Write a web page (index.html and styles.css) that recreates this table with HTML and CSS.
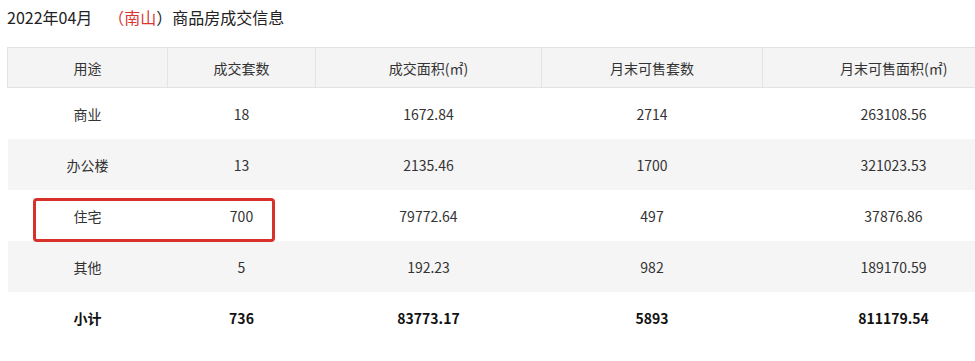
FILE: index.html
```html
<!DOCTYPE html>
<html lang="zh">
<head>
<meta charset="utf-8">
<link rel="stylesheet" href="styles.css">
</head>
<body>
<div class="page">
  <div class="title">2022年04月<span class="gap"></span><span class="red">（南山</span>）商品房成交信息</div>
  <div class="clip">
    <div class="table-wrap">
      <table class="data">
        <colgroup>
          <col class="c1"><col class="c2"><col class="c3"><col class="c4"><col class="c5">
        </colgroup>
        <thead>
          <tr><th>用途</th><th>成交套数</th><th>成交面积(㎡)</th><th>月末可售套数</th><th>月末可售面积(㎡)</th></tr>
        </thead>
        <tbody>
          <tr><td>商业</td><td>18</td><td>1672.84</td><td>2714</td><td>263108.56</td></tr>
          <tr class="alt"><td>办公楼</td><td>13</td><td>2135.46</td><td>1700</td><td>321023.53</td></tr>
          <tr><td>住宅</td><td>700</td><td>79772.64</td><td>497</td><td>37876.86</td></tr>
          <tr class="alt"><td>其他</td><td>5</td><td>192.23</td><td>982</td><td>189170.59</td></tr>
          <tr class="total"><td>小计</td><td>736</td><td>83773.17</td><td>5893</td><td>811179.54</td></tr>
        </tbody>
      </table>
      <div class="highlight"></div>
    </div>
  </div>
</div>
</body>
</html>
```
FILE: styles.css
```css
html, body {
  margin: 0;
  padding: 0;
  background: #fff;
  overflow: hidden;
}
body {
  font-family: "Noto Sans CJK SC", "Noto Sans", sans-serif;
  color: #222;
}
.page {
  padding: 7px 0 0 7px;
  width: 975px;
  box-sizing: border-box;
}
.title {
  font-size: 16px;
  line-height: 20px;
  height: 20px;
  color: #222;
}
.gap {
  display: inline-block;
  width: 16px;
}
.red {
  color: #d8362f;
}
.clip {
  margin-top: 20px;
  width: 968px;
  overflow: hidden;
}
.table-wrap {
  position: relative;
  width: 1017px;
}
.data {
  border-collapse: collapse;
  table-layout: fixed;
  width: 1017px;
  font-size: 14px;
  color: #333;
}
.c1 { width: 160px; }
.c2 { width: 148px; }
.c3 { width: 226px; }
.c4 { width: 221px; }
.c5 { width: 262px; }
.data th {
  height: 39px;
  padding: 0;
  font-weight: normal;
  background: #f4f4f4;
  border-top: 1px solid #e2e2e2;
  border-bottom: 1px solid #e2e2e2;
  border-left: 1px solid #e4e4e4;
  text-align: center;
}
.data td {
  height: 51px;
  padding: 0;
  text-align: center;
}
.data tr.alt td {
  background: #f5f5f5;
}
.data tr.total td {
  font-weight: bold;
  color: #111;
}
.highlight {
  position: absolute;
  left: 26px;
  top: 151px;
  width: 236px;
  height: 38px;
  border: 3px solid #d8302b;
  border-radius: 4px;
}
```
